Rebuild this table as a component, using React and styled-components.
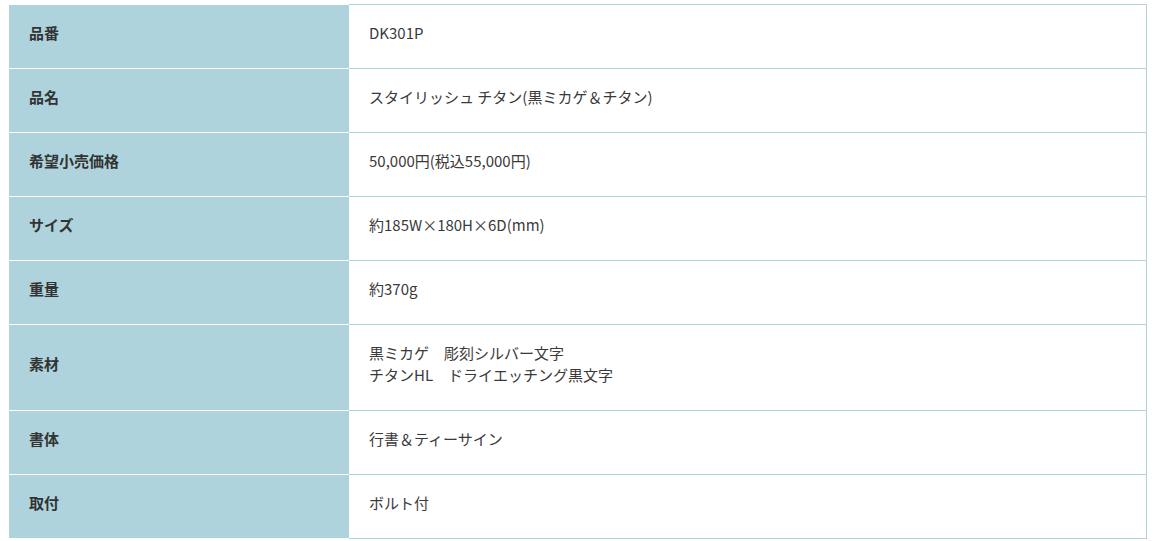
import React from 'react';
import styled, { createGlobalStyle } from 'styled-components';

const GlobalStyle = createGlobalStyle`
  html, body {
    margin: 0;
    padding: 0;
    background: #fff;
  }
  body {
    font-family: "Noto Sans CJK JP", "Noto Sans", sans-serif;
    color: #333;
  }
`;

const Wrapper = styled.div`
  padding: 4px 6px 0 9px;
`;

const SpecTable = styled.div`
  display: grid;
  grid-template-columns: 340px 1fr;
`;

const HeadCell = styled.div`
  background: #afd3dc;
  border-bottom: 1px solid #fff;
  border-top: ${props => (props.first ? '1px solid #fff' : 'none')};
  padding: 17px 20px 24px;
  font-size: 15px;
  line-height: 22px;
  font-weight: bold;
  color: #333;
  display: flex;
  align-items: center;
`;

const DataCell = styled.div`
  border-bottom: 1px solid #afd3dc;
  border-right: 1px solid #afd3dc;
  border-top: ${props => (props.first ? '1px solid #afd3dc' : 'none')};
  padding: 17px 20px 24px;
  font-size: 15px;
  line-height: 22px;
  color: #3a3a3a;
`;

const Line = styled.div``;

const specs = [
  { label: '品番', value: ['DK301P'] },
  { label: '品名', value: ['スタイリッシュ チタン(黒ミカゲ＆チタン)'] },
  { label: '希望小売価格', value: ['50,000円(税込55,000円)'] },
  { label: 'サイズ', value: ['約185W×180H×6D(mm)'] },
  { label: '重量', value: ['約370g'] },
  { label: '素材', value: ['黒ミカゲ　彫刻シルバー文字', 'チタンHL　ドライエッチング黒文字'] },
  { label: '書体', value: ['行書＆ティーサイン'] },
  { label: '取付', value: ['ボルト付'] },
];

export default function App() {
  return (
    <>
      <GlobalStyle />
      <Wrapper>
        <SpecTable>
          {specs.map((row, i) => (
            <React.Fragment key={row.label}>
              <HeadCell first={i === 0}>{row.label}</HeadCell>
              <DataCell first={i === 0}>
                {row.value.map(v => (
                  <Line key={v}>{v}</Line>
                ))}
              </DataCell>
            </React.Fragment>
          ))}
        </SpecTable>
      </Wrapper>
    </>
  );
}
